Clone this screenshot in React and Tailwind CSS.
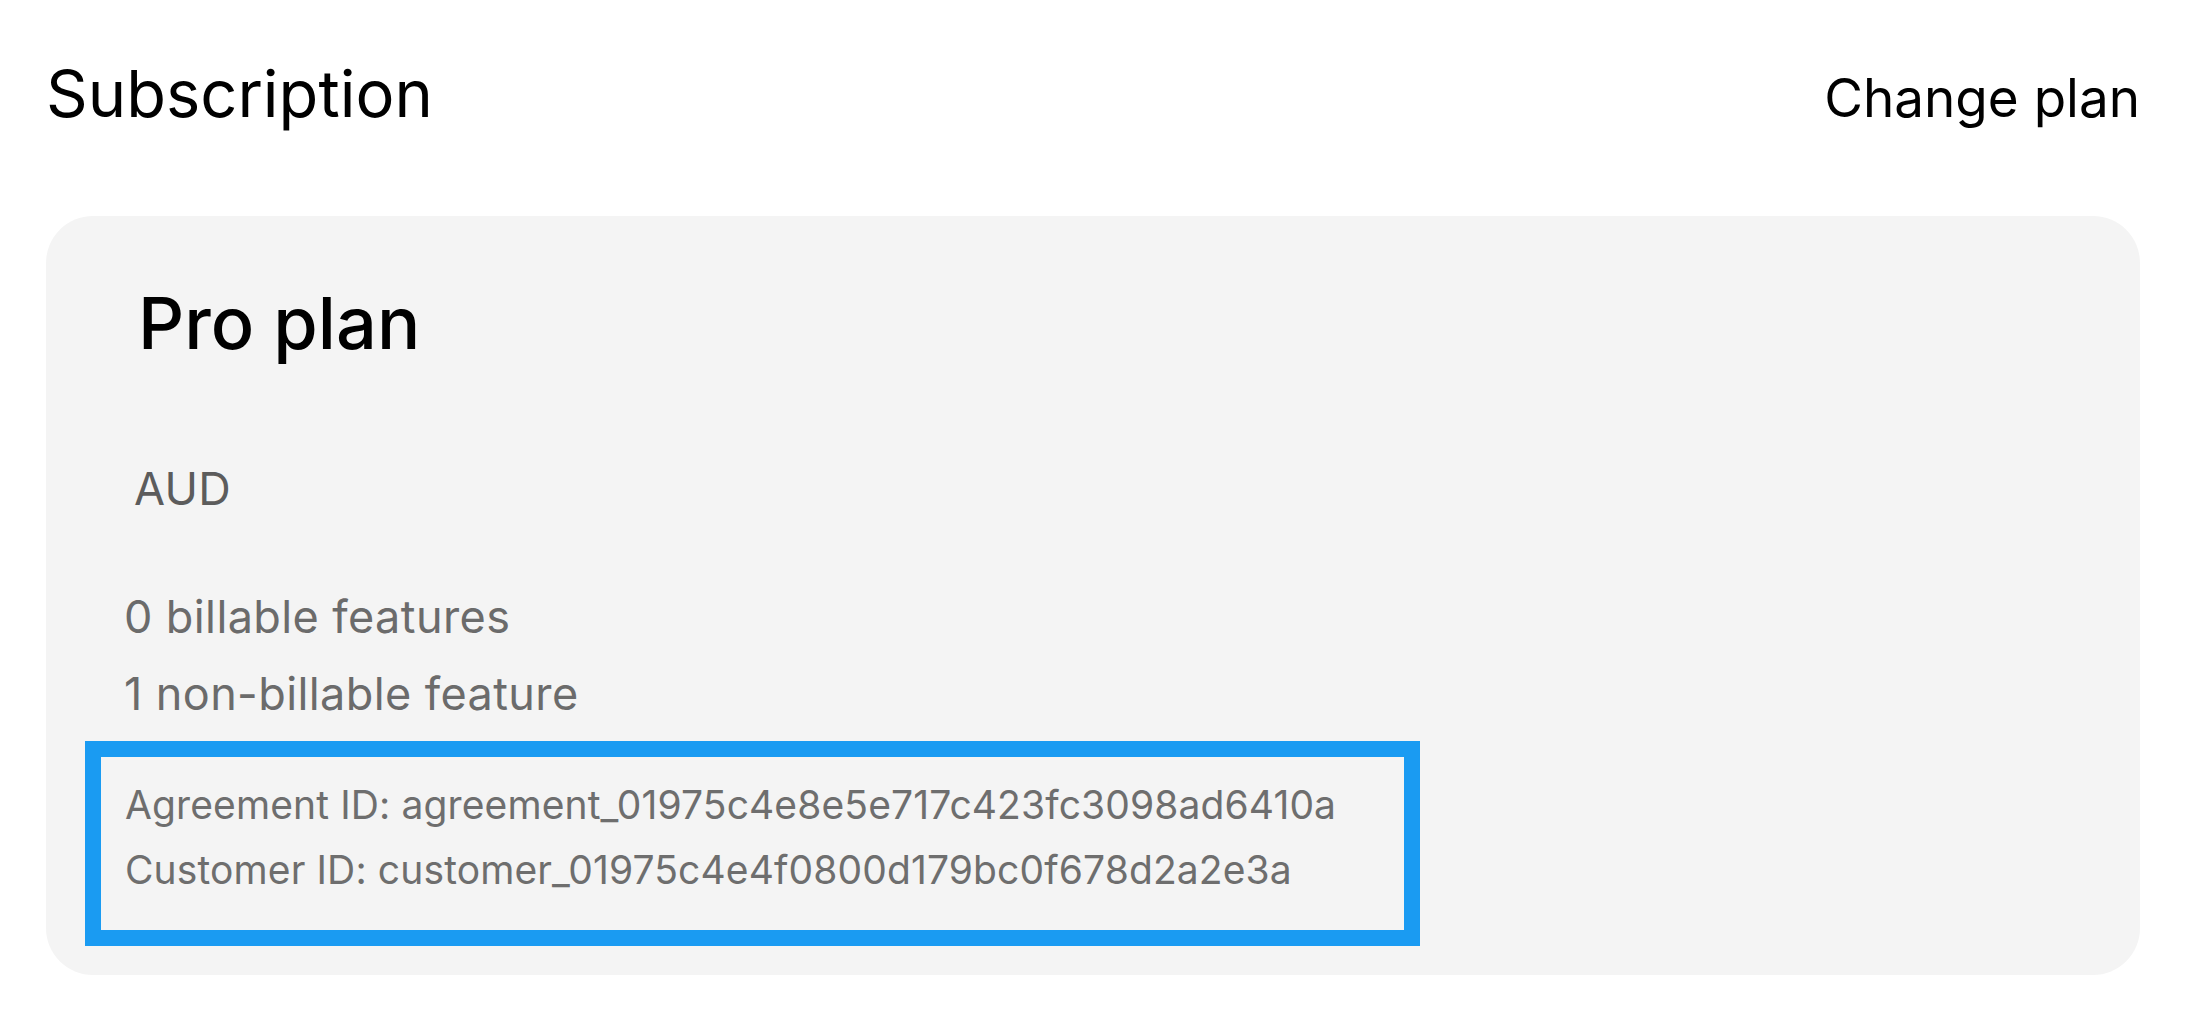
const agreementId = "agreement_01975c4e8e5e717c423fc3098ad6410a";
const customerId = "customer_01975c4e4f0800d179bc0f678d2a2e3a";

function PlanCard() {
  return (
    <div className="mt-[90px] rounded-[47px] bg-[#f4f4f4] pt-[71px] pb-[29px] pl-[78px]">
      <h2 className="ml-[14px] text-[72px] leading-none font-medium text-black">Pro plan</h2>
      <p className="ml-[10px] mt-[107px] text-[45px] leading-none tracking-[0.3px] text-[#5c5c5c]">AUD</p>
      <div className="mt-[83px] flex flex-col gap-[32px] text-[45px] leading-none tracking-[0.4px] text-[#6b6b6b]">
        <span>0 billable features</span>
        <span>1 non-billable feature</span>
      </div>
      {/* highlighted id block */}
      <div className="-ml-[39px] mt-[25px] w-[1335px] border-[16px] border-[#1a9bf2] pt-[28px] pb-[41px] pl-[24px] text-[39px] leading-none tracking-[0.12px] text-[#6e6e6e]">
        <div>Agreement ID: {agreementId}</div>
        <div className="mt-[26px]">Customer ID: {customerId}</div>
      </div>
    </div>
  );
}

export default function App() {
  return (
    <div className="min-h-[1031px] w-full bg-white" style={{ fontFamily: "Inter, 'Noto Sans', sans-serif" }}>
      <div className="ml-[46px] w-[2094px] pt-[61px]">
        <div className="flex items-baseline justify-between">
          <h1 className="text-[65px] leading-none text-black">Subscription</h1>
          <button className="text-[53px] leading-none text-black">Change plan</button>
        </div>
        <PlanCard />
      </div>
    </div>
  );
}
